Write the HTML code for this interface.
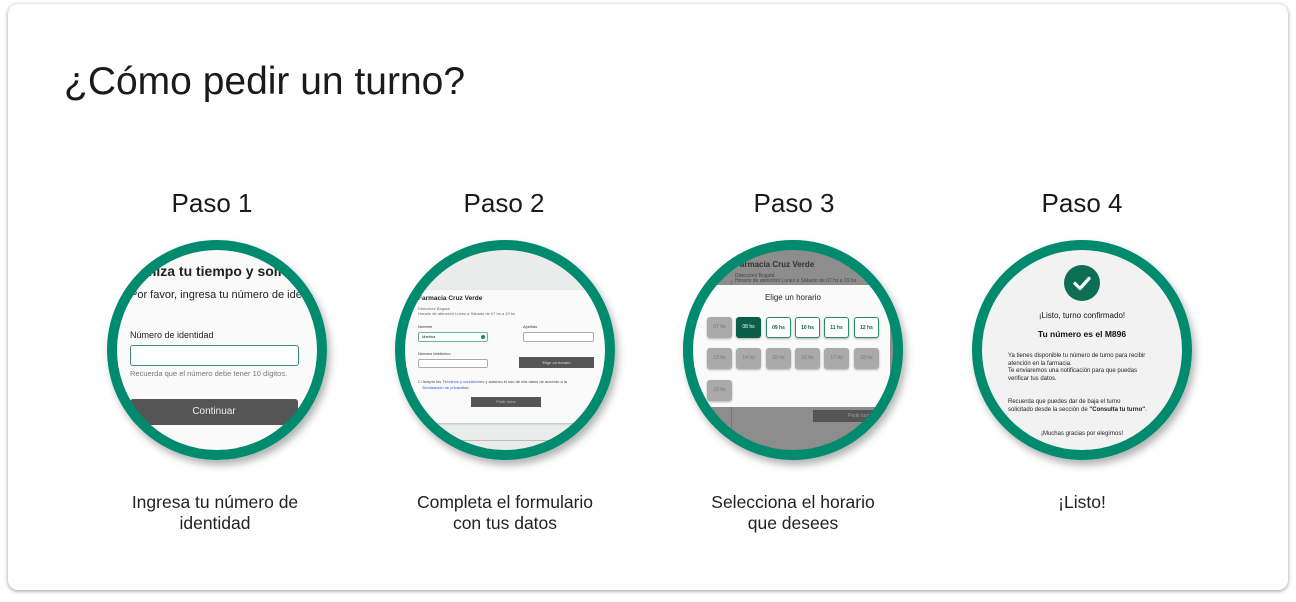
<!DOCTYPE html>
<html><head><meta charset="utf-8"><style>
*{margin:0;padding:0;box-sizing:border-box}
body{width:1296px;height:602px;background:#fff;font-family:"Liberation Sans",sans-serif;color:#1a1a1a;position:relative;overflow:hidden}
.card{position:absolute;left:8px;top:4px;width:1280px;height:586px;background:#fff;border-radius:10px;box-shadow:0 1px 4px rgba(0,0,0,.4)}
h1{position:absolute;left:64px;top:60px;font-size:39px;font-weight:normal;color:#1a1a1a}
.paso{position:absolute;top:188px;font-size:26px;width:200px;text-align:center}
.cap{position:absolute;top:492px;font-size:17.5px;line-height:21px;width:260px;text-align:center;color:#222}
.circ{position:absolute;width:220px;height:220px;border-radius:50%;box-shadow:3px 5px 8px rgba(0,0,0,.3)}
.in{position:absolute;left:0;top:0;width:220px;height:220px;border-radius:50%;overflow:hidden}
.ring{position:absolute;left:0;top:0;width:220px;height:220px;border-radius:50%;border:10px solid #008a6e}
.a{position:absolute;white-space:nowrap}
.hb{position:absolute;width:25px;height:21px;border-radius:3px;font-size:5px;text-align:center;line-height:21px;background:#aaa;color:#777;box-shadow:0 1px 2px rgba(0,0,0,.3)}
.hb.o{background:#fff;border:1px solid #2c8a70;color:#0b5e47;font-weight:bold}
.hb.s{background:#0b5e47;color:#fff}
</style></head><body>
<div class="card"></div>
<h1>¿Cómo pedir un turno?</h1>

<div class="paso" style="left:112px">Paso 1</div>
<div class="paso" style="left:404px">Paso 2</div>
<div class="paso" style="left:694px">Paso 3</div>
<div class="paso" style="left:982px">Paso 4</div>

<div class="cap" style="left:85px">Ingresa tu número de<br>identidad</div>
<div class="cap" style="left:375px">Completa el formulario<br>con tus datos</div>
<div class="cap" style="left:663px">Selecciona el horario<br>que desees</div>
<div class="cap" style="left:952px">¡Listo!</div>

<!-- circle 1 -->
<div class="circ" style="left:107px;top:240px">
 <div class="in" style="background:#fafafa">
  <div class="a" style="left:33px;top:23px;font-size:14px;font-weight:bold;color:#222">imiza tu tiempo y solic</div>
  <div class="a" style="left:23px;top:49px;font-size:11px;color:#222">Por favor, ingresa tu número de identidad</div>
  <div class="a" style="left:23px;top:90px;font-size:9px;color:#222">Número de identidad</div>
  <div class="a" style="left:23px;top:105px;width:169px;height:21px;border:1.5px solid #3a8f78;border-radius:3px;background:#fff"></div>
  <div class="a" style="left:23px;top:129px;font-size:7.5px;color:#777">Recuerda que el número debe tener 10 dígitos.</div>
  <div class="a" style="left:23px;top:159px;width:168px;height:26px;background:#555;border-radius:3px;color:#eee;font-size:10px;text-align:center;line-height:26px">Continuar</div>
 </div>
 <div class="ring"></div>
</div>

<!-- circle 2 -->
<div class="circ" style="left:395px;top:240px">
 <div class="in" style="background:#e9ecea">
  <div class="a" style="left:28px;top:30px;font-size:5px;font-weight:bold;color:#333">05/2023</div>
  <div class="a" style="left:0;top:50px;width:220px;height:133px;background:#fafafa;box-shadow:0 1px 2px rgba(0,0,0,.2)"></div>
  <div class="a" style="left:23px;top:55px;font-size:6.5px;font-weight:bold;color:#222">Farmacia Cruz Verde</div>
  <div class="a" style="left:23px;top:66px;font-size:4px;color:#666;line-height:5px">Dirección/ Bogotá<br>Horario de atención/ Lunes a Sábado de 07 hs a 19 hs</div>
  <div class="a" style="left:23px;top:84px;font-size:4px;color:#333">Nombre</div>
  <div class="a" style="left:23px;top:92px;width:70px;height:10px;border:1px solid #6bb596;border-radius:2px;background:#fff;font-size:4px;line-height:8px;padding-left:3px">Martina<span style="position:absolute;right:2px;top:2px;width:4px;height:4px;border-radius:50%;background:#1a8a4a"></span></div>
  <div class="a" style="left:128px;top:84px;font-size:4px;color:#333">Apellido</div>
  <div class="a" style="left:128px;top:92px;width:71px;height:10px;border:1px solid #aaa;border-radius:2px;background:#fff"></div>
  <div class="a" style="left:23px;top:111px;font-size:4px;color:#333">Número telefónico</div>
  <div class="a" style="left:23px;top:119px;width:70px;height:9px;border:1px solid #aaa;border-radius:2px;background:#fff"></div>
  <div class="a" style="left:124px;top:117px;width:75px;height:11px;background:#555;color:#ddd;font-size:4px;text-align:center;line-height:11px">Elige un horario</div>
  <div class="a" style="left:23px;top:139px;font-size:4px;color:#444;line-height:5.5px">☐ Acepto los <span style="color:#3355cc">Términos y condiciones</span> y autorizo el uso de mis datos de acuerdo a la<br>&nbsp;&nbsp;&nbsp;&nbsp;<span style="color:#3355cc">Declaración de privacidad</span>.</div>
  <div class="a" style="left:76px;top:157px;width:70px;height:10px;background:#555;color:#bbb;font-size:4px;text-align:center;line-height:10px">Pedir turno</div>
  <div class="a" style="left:0;top:200px;width:220px;height:1px;background:#bbb"></div>
 </div>
 <div class="ring"></div>
</div>

<!-- circle 3 -->
<div class="circ" style="left:683px;top:240px">
 <div class="in" style="background:#8d8d8d">
  <div class="a" style="left:52px;top:20px;font-size:8px;font-weight:bold;color:#333">Farmacia Cruz Verde</div>
  <div class="a" style="left:52px;top:34px;font-size:5px;color:#444;line-height:5px">Dirección/ Bogotá<br>Horario de atención/ Lunes a Sábado de 07 hs a 19 hs</div>
  <div class="a" style="left:48px;top:40px;width:1px;height:180px;background:#777"></div>
  <div class="a" style="left:130px;top:170px;width:80px;height:12px;background:#555;color:#999;font-size:5px;line-height:12px;padding-left:35px">Pedir turno</div>
  <div class="a" style="left:10px;top:45px;width:197px;height:122px;background:#fafafa"></div>
  <div class="a" style="left:0;top:53px;width:220px;text-align:center;font-size:8px;color:#222">Elige un horario</div>
  <div class="hb" style="left:24px;top:77px">07 hs</div>
  <div class="hb s" style="left:53px;top:77px">08 hs</div>
  <div class="hb o" style="left:83px;top:77px">09 hs</div>
  <div class="hb o" style="left:112px;top:77px">10 hs</div>
  <div class="hb o" style="left:141px;top:77px">11 hs</div>
  <div class="hb o" style="left:171px;top:77px">12 hs</div>
  <div class="hb" style="left:24px;top:108px">13 hs</div>
  <div class="hb" style="left:53px;top:108px">14 hs</div>
  <div class="hb" style="left:83px;top:108px">15 hs</div>
  <div class="hb" style="left:112px;top:108px">16 hs</div>
  <div class="hb" style="left:141px;top:108px">17 hs</div>
  <div class="hb" style="left:171px;top:108px">18 hs</div>
  <div class="hb" style="left:24px;top:140px">19 hs</div>
 </div>
 <div class="ring"></div>
</div>

<!-- circle 4 -->
<div class="circ" style="left:972px;top:240px">
 <div class="in" style="background:#f2f2f2">
  <div class="a" style="left:92px;top:25px;width:36px;height:36px;border-radius:50%;background:#0b6e55">
   <svg width="36" height="36" viewBox="0 0 36 36"><path d="M11 18.5l5 5 9-10" fill="none" stroke="#fff" stroke-width="3.2" stroke-linecap="round" stroke-linejoin="round"/></svg>
  </div>
  <div class="a" style="left:0;top:71px;width:220px;text-align:center;font-size:8px;color:#111">¡Listo, turno confirmado!</div>
  <div class="a" style="left:0;top:89px;width:220px;text-align:center;font-size:8.5px;font-weight:bold;color:#111">Tu número es el M896</div>
  <div class="a" style="left:36px;top:113px;font-size:6px;line-height:7.5px;color:#222">Ya tienes disponible tu número de turno para recibir<br>atención en la farmacia.<br>Te enviaremos una notificación para que puedas<br>verificar tus datos.</div>
  <div class="a" style="left:36px;top:159px;font-size:6px;line-height:7.5px;color:#222">Recuerda que puedes dar de baja el turno<br>solicitado desde la sección de <b>"Consulta tu turno"</b>.</div>
  <div class="a" style="left:0;top:191px;width:220px;text-align:center;font-size:6px;color:#222">¡Muchas gracias por elegirnos!</div>
 </div>
 <div class="ring"></div>
</div>
</body></html>
